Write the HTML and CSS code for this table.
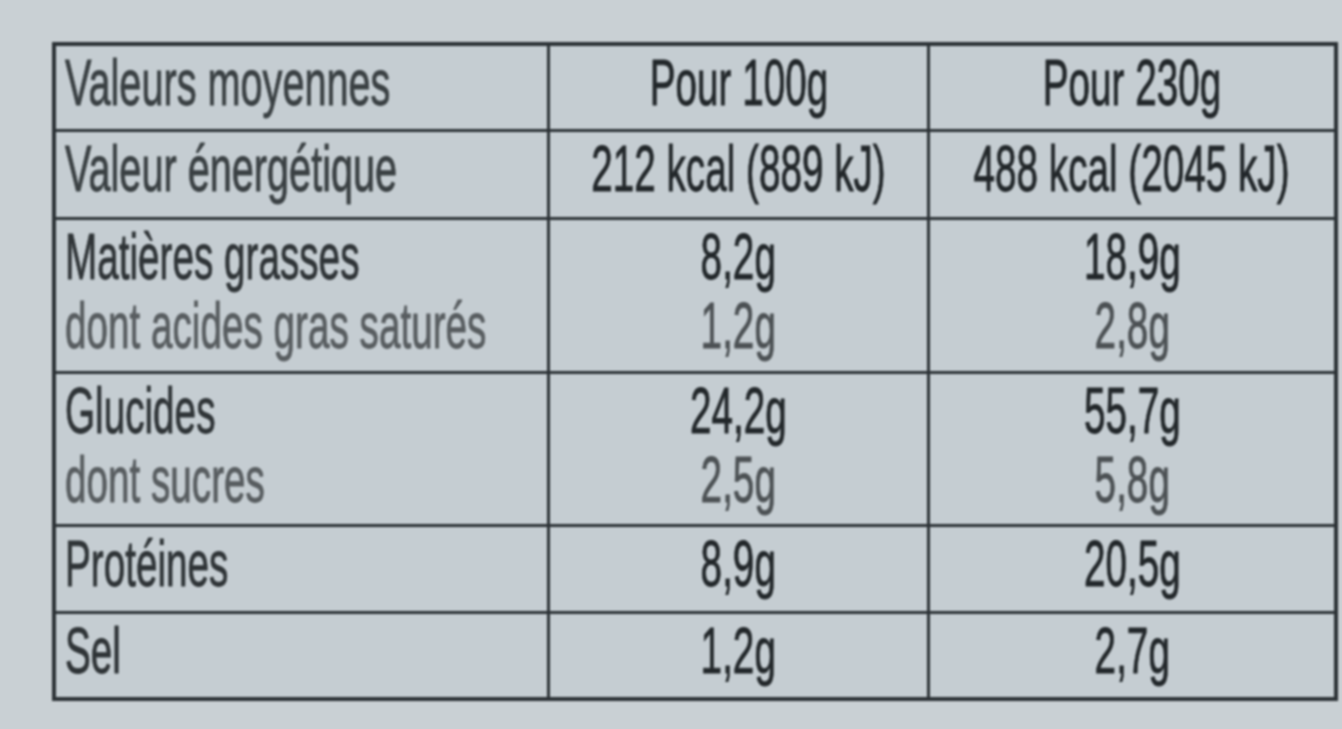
FILE: index.html
```html
<!DOCTYPE html>
<html lang="fr">
<head>
<meta charset="utf-8">
<title>Valeurs nutritionnelles</title>
<link rel="stylesheet" href="styles.css">
</head>
<body>
<main class="label">
  <div class="nutri">
    <div class="cell left"><div class="ln head"><span>Valeurs moyennes</span></div></div>
    <div class="cell mid"><div class="ln val"><span>Pour 100g</span></div></div>
    <div class="cell mid"><div class="ln val"><span>Pour 230g</span></div></div>

    <div class="cell left"><div class="ln head"><span>Valeur énergétique</span></div></div>
    <div class="cell mid"><div class="ln val"><span>212 kcal (889 kJ)</span></div></div>
    <div class="cell mid"><div class="ln val"><span>488 kcal (2045 kJ)</span></div></div>

    <div class="cell left"><div class="ln main"><span>Matières grasses</span></div><div class="ln sub"><span>dont acides gras saturés</span></div></div>
    <div class="cell mid"><div class="ln val"><span>8,2g</span></div><div class="ln subval"><span>1,2g</span></div></div>
    <div class="cell mid"><div class="ln val"><span>18,9g</span></div><div class="ln subval"><span>2,8g</span></div></div>

    <div class="cell left"><div class="ln main"><span>Glucides</span></div><div class="ln sub"><span>dont sucres</span></div></div>
    <div class="cell mid"><div class="ln val"><span>24,2g</span></div><div class="ln subval"><span>2,5g</span></div></div>
    <div class="cell mid"><div class="ln val"><span>55,7g</span></div><div class="ln subval"><span>5,8g</span></div></div>

    <div class="cell left"><div class="ln main"><span>Protéines</span></div></div>
    <div class="cell mid"><div class="ln val"><span>8,9g</span></div></div>
    <div class="cell mid"><div class="ln val"><span>20,5g</span></div></div>

    <div class="cell left"><div class="ln main"><span>Sel</span></div></div>
    <div class="cell mid"><div class="ln val"><span>1,2g</span></div></div>
    <div class="cell mid"><div class="ln val"><span>2,7g</span></div></div>
  </div>
</main>
</body>
</html>
```

FILE: styles.css
```css
html, body {
  margin: 0;
  padding: 0;
  width: 1342px;
  height: 729px;
  overflow: hidden;
  background: #c9d0d4;
}

.label {
  padding: 42px 0 0 52px;
}

.nutri {
  display: grid;
  grid-template-columns: 491px 377px 404px;
  grid-template-rows: 83px 85px 151px 150px 84px 83px;
  gap: 3px;
  width: max-content;
  background: #2c3236;
  border: 4px solid #2c3236;
  filter: blur(0.9px);
  font-family: "Liberation Sans", Arial, sans-serif;
  font-size: 65px;
  line-height: 69px;
}

.cell {
  background: #c5cdd2;
  padding-top: 2px;
  min-width: 0;
}

.cell.left {
  padding-left: 9px;
}

.ln {
  display: flex;
  white-space: nowrap;
}

.left .ln {
  justify-content: flex-start;
}

.mid .ln {
  justify-content: center;
}

.ln span {
  display: inline-block;
  flex: none;
  transform: scaleX(0.595);
  -webkit-text-stroke: 0.9px currentColor;
}

.left .ln span {
  transform-origin: left center;
}

.mid .ln span {
  transform-origin: center center;
}

.head { color: #3a4043; }
.head span { transform: scaleX(0.61); }
.main { color: #2f3437; }
.sub { color: #585d60; }
.val { color: #22272a; }
.subval { color: #4c5154; }
```
